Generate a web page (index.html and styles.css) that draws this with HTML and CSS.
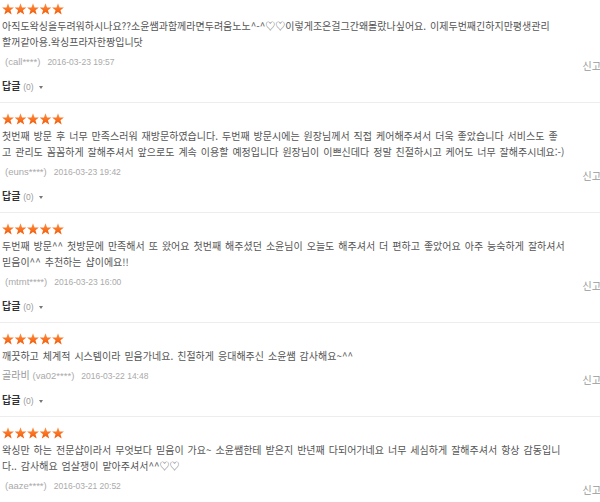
FILE: index.html
```html
<!DOCTYPE html>
<html lang="ko">
<head>
    <meta charset="UTF-8">
    <meta name="viewport" content="width=device-width, initial-scale=1.0">
    <title>이용후기</title>
    <link rel="stylesheet" href="styles.css">
</head>
<body>
    <!-- 후기 목록 -->
    <ul class="review-list">
        <li class="review">
            <div class="stars"><span class="star"></span><span class="star"></span><span class="star"></span><span class="star"></span><span class="star"></span></div>
            <p class="review-text">아직도왁싱을두려워하시나요??소윤쌤과함께라면두려움노노^-^♡♡이렇게조은걸그간왜몰랐나싶어요. 이제두번째긴하지만평생관리<br>할꺼같아용.왁싱프라자한짱입니닷</p>
            <div class="review-meta">
                <span class="writer"><span class="uid">(call****)</span><span class="date">2016-03-23 19:57</span></span>
                <a class="report">신고</a>
            </div>
            <div class="reply">답글 <span class="count">(0)</span><span class="caret"></span></div>
        </li>
        <li class="review">
            <div class="stars"><span class="star"></span><span class="star"></span><span class="star"></span><span class="star"></span><span class="star"></span></div>
            <p class="review-text">첫번째 방문 후 너무 만족스러워 재방문하였습니다. 두번째 방문시에는 원장님께서 직접 케어해주셔서 더욱 좋았습니다 서비스도 좋<br>고 관리도 꼼꼼하게 잘해주셔서 앞으로도 계속 이용할 예정입니다 원장님이 이쁘신데다 정말 친절하시고 케어도 너무 잘해주시네요:-)</p>
            <div class="review-meta">
                <span class="writer"><span class="uid">(euns****)</span><span class="date">2016-03-23 19:42</span></span>
                <a class="report">신고</a>
            </div>
            <div class="reply">답글 <span class="count">(0)</span><span class="caret"></span></div>
        </li>
        <li class="review">
            <div class="stars"><span class="star"></span><span class="star"></span><span class="star"></span><span class="star"></span><span class="star"></span></div>
            <p class="review-text">두번째 방문^^ 첫방문에 만족해서 또 왔어요 첫번째 해주셨던 소윤님이 오늘도 해주셔서 더 편하고 좋았어요 아주 능숙하게 잘하셔서 <br>믿음이^^ 추천하는 샵이에요!!</p>
            <div class="review-meta">
                <span class="writer"><span class="uid">(mtmt****)</span><span class="date">2016-03-23 16:00</span></span>
                <a class="report">신고</a>
            </div>
            <div class="reply">답글 <span class="count">(0)</span><span class="caret"></span></div>
        </li>
        <li class="review">
            <div class="stars"><span class="star"></span><span class="star"></span><span class="star"></span><span class="star"></span><span class="star"></span></div>
            <p class="review-text">깨끗하고 체계적 시스템이라 믿음가네요. 친절하게 응대해주신 소윤쌤 감사해요~^^</p>
            <div class="review-meta">
                <span class="writer"><span class="nick">골라비</span><span class="uid">(va02****)</span><span class="date">2016-03-22 14:48</span></span>
                <a class="report">신고</a>
            </div>
            <div class="reply">답글 <span class="count">(0)</span><span class="caret"></span></div>
        </li>
        <li class="review">
            <div class="stars"><span class="star"></span><span class="star"></span><span class="star"></span><span class="star"></span><span class="star"></span></div>
            <p class="review-text">왁싱만 하는 전문샵이라서 무엇보다 믿음이 가요~ 소윤쌤한테 받은지 반년째 다되어가네요 너무 세심하게 잘해주셔서 항상 감동입니<br>다.. 감사해요 엄살쟁이 맡아주셔서^^♡♡</p>
            <div class="review-meta">
                <span class="writer"><span class="uid">(aaze****)</span><span class="date">2016-03-21 20:52</span></span>
                <a class="report">신고</a>
            </div>
            <div class="reply">답글 <span class="count">(0)</span><span class="caret"></span></div>
        </li>
    </ul>
</body>
</html>
```

FILE: styles.css
```css
html, body {
    overflow: hidden;
}
body {
    margin: 0;
    background-color: #fff;
    font-family: "Noto Sans CJK KR", "Liberation Sans", sans-serif;
    font-size: 10px;
    color: #555;
}
.review-list {
    list-style: none;
    margin: -7px 0 0 0;
    padding: 0;
    width: 601px;
}
.review {
    padding: 10px 0 7px 2px;
    border-bottom: 1px solid #ededed;
}
/* 별점 */
.stars {
    display: flex;
    gap: 0.5px;
    height: 12px;
}
.star {
    width: 12px;
    height: 12px;
    background: linear-gradient(#ff9448, #f25500);
    clip-path: polygon(50% 2.5%, 62.8% 36.7%, 99.2% 38.2%, 70.6% 60.8%, 80.4% 96%, 50% 75.8%, 19.6% 96%, 29.4% 60.8%, 0.8% 38.2%, 37.3% 36.7%);
}
.review-text {
    margin: 3px 0 0 0;
    line-height: 16px;
    white-space: nowrap;
    word-spacing: 1.2px;
    color: #555;
}
.review-meta {
    display: flex;
    justify-content: space-between;
    align-items: flex-start;
    margin-top: 3px;
    height: 21px;
}
.writer {
    line-height: 16px;
    color: #aaa;
}
.nick {
    color: #999;
}
.uid {
    font-family: "Liberation Sans", sans-serif;
    font-size: 9.5px;
    margin-left: 3px;
}
.date {
    font-family: "Liberation Sans", sans-serif;
    font-size: 8.5px;
    margin-left: 7px;
}
.report {
    margin-top: 5px;
    line-height: 16px;
    color: #999;
    cursor: pointer;
}
/* 답글 */
.reply {
    margin-top: 4px;
    line-height: 16px;
    font-weight: bold;
    color: #333;
}
.reply .count {
    font-family: "Liberation Sans", sans-serif;
    font-size: 8.5px;
    font-weight: normal;
    color: #999;
}
.caret {
    display: inline-block;
    margin-left: 5px;
    vertical-align: middle;
    border-left: 2px solid transparent;
    border-right: 2px solid transparent;
    border-top: 3px solid #777;
}
```
